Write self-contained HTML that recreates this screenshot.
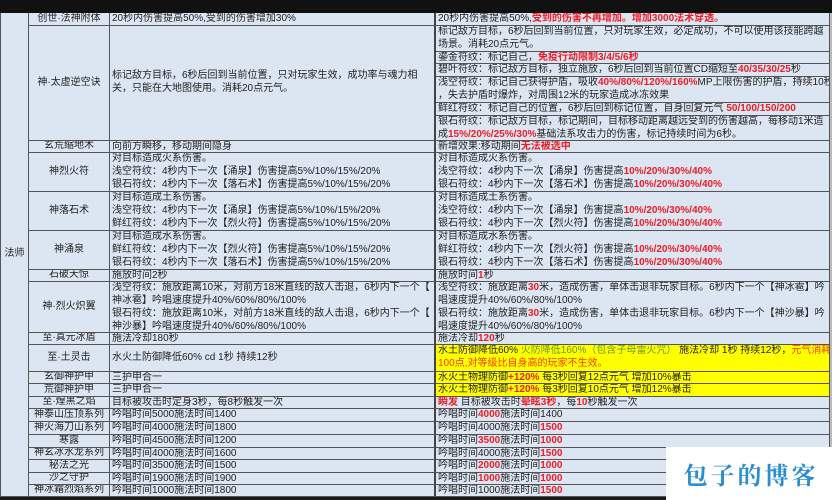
<!DOCTYPE html>
<html><head><meta charset="utf-8"><style>
*{margin:0;padding:0;box-sizing:border-box}
body{width:832px;height:500px;overflow:hidden;background:#1a1a1a;position:relative;font-family:"Liberation Sans","Noto Sans CJK SC",sans-serif;font-size:10px;color:#222;}
.c{position:absolute;background:#dce6f2;border-right:1px solid #555;border-bottom:1px solid #555;line-height:12.9px;padding-left:2px;white-space:nowrap;overflow:hidden}
.m{display:flex;align-items:center;justify-content:center;padding:0}
.r{color:#ee1c24;font-weight:bold}
.y{background:#ffff00}
.g{color:#6a9a2a}
.o{color:#ff3a00}
</style></head><body>
<div style="position:absolute;left:0;top:0;width:832px;height:13px;background:#111"></div>
<div class="c m" style="left:0;top:13px;width:29px;height:484px;border-left:1px solid #555">法师</div>

<div class="c m" style="left:29px;top:13px;width:81px;height:13px">创世·法神附体</div>
<div class="c m" style="left:29px;top:26px;width:81px;height:115px">神·太虚逆空诀</div>
<div class="c m" style="left:29px;top:141px;width:81px;height:12px">玄荒缩地术</div>
<div class="c m" style="left:29px;top:153px;width:81px;height:39px">神烈火符</div>
<div class="c m" style="left:29px;top:192px;width:81px;height:39px">神落石术</div>
<div class="c m" style="left:29px;top:231px;width:81px;height:39px">神涌泉</div>
<div class="c m" style="left:29px;top:270px;width:81px;height:12px">石破天惊</div>
<div class="c m" style="left:29px;top:282px;width:81px;height:51px">神·烈火炽翼</div>
<div class="c m" style="left:29px;top:333px;width:81px;height:12px">至·真元冰盾</div>
<div class="c m" style="left:29px;top:345px;width:81px;height:27px">至·土灵击</div>
<div class="c m" style="left:29px;top:372px;width:81px;height:12px">玄御神护甲</div>
<div class="c m" style="left:29px;top:384px;width:81px;height:13px">荒御神护甲</div>
<div class="c m" style="left:29px;top:397px;width:81px;height:12px">至·煌黑之焰</div>
<div class="c m" style="left:29px;top:409px;width:81px;height:13px">神泰山压顶系列</div>
<div class="c m" style="left:29px;top:422px;width:81px;height:13px">神火海刀山系列</div>
<div class="c m" style="left:29px;top:435px;width:81px;height:13px">寒露</div>
<div class="c m" style="left:29px;top:448px;width:81px;height:12px">神玄冰水龙系列</div>
<div class="c m" style="left:29px;top:460px;width:81px;height:13px">秘法之光</div>
<div class="c m" style="left:29px;top:473px;width:81px;height:12px">沙之守护</div>
<div class="c m" style="left:29px;top:485px;width:81px;height:12px">神冰霜烈焰系列</div>

<div class="c" style="left:110px;top:13px;width:326px;height:13px;border-right:2px solid #444">20秒内伤害提高50%,受到的伤害增加30%</div>
<div class="c" style="left:110px;top:26px;width:326px;height:115px;border-right:2px solid #444;display:flex;align-items:center">标记敌方目标，6秒后回到当前位置，只对玩家生效，成功率与魂力相<br>关，只能在大地图使用。消耗20点元气。</div>
<div class="c" style="left:110px;top:141px;width:326px;height:12px;border-right:2px solid #444">向前方瞬移，移动期间隐身</div>
<div class="c" style="left:110px;top:153px;width:326px;height:39px;border-right:2px solid #444">对目标造成火系伤害。<br>浅空符纹：4秒内下一次【涌泉】伤害提高5%/10%/15%/20%<br>银石符纹：4秒内下一次【落石术】伤害提高5%/10%/15%/20%</div>
<div class="c" style="left:110px;top:192px;width:326px;height:39px;border-right:2px solid #444">对目标造成土系伤害。<br>浅空符纹：4秒内下一次【涌泉】伤害提高5%/10%/15%/20%<br>鲜红符纹：4秒内下一次【烈火符】伤害提高5%/10%/15%/20%</div>
<div class="c" style="left:110px;top:231px;width:326px;height:39px;border-right:2px solid #444">对目标造成水系伤害。<br>鲜红符纹：4秒内下一次【烈火符】伤害提高5%/10%/15%/20%<br>银石符纹：4秒内下一次【落石术】伤害提高5%/10%/15%/20%</div>
<div class="c" style="left:110px;top:270px;width:326px;height:12px;border-right:2px solid #444">施放时间2秒</div>
<div class="c" style="left:110px;top:282px;width:326px;height:51px;border-right:2px solid #444">浅空符纹：施放距离10米，对前方18米直线的敌人击退，6秒内下一个【<br>神冰雹】吟唱速度提升40%/60%/80%/100%<br>银石符纹：施放距离10米，对前方18米直线的敌人击退，6秒内下一个【<br>神沙暴】吟唱速度提升40%/60%/80%/100%</div>
<div class="c" style="left:110px;top:333px;width:326px;height:12px;border-right:2px solid #444">施法冷却180秒</div>
<div class="c" style="left:110px;top:345px;width:326px;height:27px;border-right:2px solid #444;display:flex;align-items:center">水火土防御降低60% cd 1秒 持续12秒</div>
<div class="c" style="left:110px;top:372px;width:326px;height:12px;border-right:2px solid #444">三护甲合一</div>
<div class="c" style="left:110px;top:384px;width:326px;height:13px;border-right:2px solid #444">三护甲合一</div>
<div class="c" style="left:110px;top:397px;width:326px;height:12px;border-right:2px solid #444">目标被攻击时定身3秒，每8秒触发一次</div>
<div class="c" style="left:110px;top:409px;width:326px;height:13px;border-right:2px solid #444">吟唱时间5000施法时间1400</div>
<div class="c" style="left:110px;top:422px;width:326px;height:13px;border-right:2px solid #444">吟唱时间4000施法时间1800</div>
<div class="c" style="left:110px;top:435px;width:326px;height:13px;border-right:2px solid #444">吟唱时间4500施法时间1200</div>
<div class="c" style="left:110px;top:448px;width:326px;height:12px;border-right:2px solid #444">吟唱时间4000施法时间1600</div>
<div class="c" style="left:110px;top:460px;width:326px;height:13px;border-right:2px solid #444">吟唱时间3500施法时间1500</div>
<div class="c" style="left:110px;top:473px;width:326px;height:12px;border-right:2px solid #444">吟唱时间1900施法时间1900</div>
<div class="c" style="left:110px;top:485px;width:326px;height:12px;border-right:2px solid #444">吟唱时间1000施法时间1800</div>

<div class="c" style="left:436px;top:13px;width:394px;height:13px">20秒内伤害提高50%,<span class="r">受到的伤害不再增加。增加3000法术穿透。</span></div>
<div class="c" style="left:436px;top:26px;width:394px;height:26px">标记敌方目标，6秒后回到当前位置，只对玩家生效，必定成功，不可以使用该技能跨越<br>场景。消耗20点元气。</div>
<div class="c" style="left:436px;top:52px;width:394px;height:12px">鎏金符纹：标记自己，<span class="r">免疫行动限制3/4/5/6秒</span></div>
<div class="c" style="left:436px;top:64px;width:394px;height:13px">碧叶符纹：标记敌方目标，独立施放，6秒后回到当前位置CD缩短至<span class="r">40/35/30/25</span>秒</div>
<div class="c" style="left:436px;top:77px;width:394px;height:26px">浅空符纹：标记自己获得护盾，吸收<span class="r">40%/80%/120%/160%</span>MP上限伤害的护盾，持续10秒<br>，失去护盾时爆炸，对周围12米的玩家造成冰冻效果</div>
<div class="c" style="left:436px;top:103px;width:394px;height:13px">鲜红符纹：标记自己的位置，6秒后回到标记位置，自身回复元气 <span class="r">50/100/150/200</span></div>
<div class="c" style="left:436px;top:116px;width:394px;height:25px">银石符纹：标记敌方目标，标记期间，目标移动距离越远受到的伤害越高，每移动1米造<br>成<span class="r">15%/20%/25%/30%</span>基础法系攻击力的伤害，标记持续时间为6秒。</div>
<div class="c" style="left:436px;top:141px;width:394px;height:12px">新增效果:移动期间<span class="r">无法被选中</span></div>
<div class="c" style="left:436px;top:153px;width:394px;height:39px">对目标造成火系伤害。<br>浅空符纹：4秒内下一次【涌泉】伤害提高<span class="r">10%/20%/30%/40%</span><br>银石符纹：4秒内下一次【落石术】伤害提高<span class="r">10%/20%/30%/40%</span></div>
<div class="c" style="left:436px;top:192px;width:394px;height:39px">对目标造成土系伤害。<br>浅空符纹：4秒内下一次【涌泉】伤害提高<span class="r">10%/20%/30%/40%</span><br>银石符纹：4秒内下一次【烈火符】伤害提高<span class="r">10%/20%/30%/40%</span></div>
<div class="c" style="left:436px;top:231px;width:394px;height:39px">对目标造成水系伤害。<br>鲜红符纹：4秒内下一次【烈火符】伤害提高<span class="r">10%/20%/30%/40%</span><br>银石符纹：4秒内下一次【落石术】伤害提高<span class="r">10%/20%/30%/40%</span></div>
<div class="c" style="left:436px;top:270px;width:394px;height:12px">施放时间<span class="r">1</span>秒</div>
<div class="c" style="left:436px;top:282px;width:394px;height:51px">浅空符纹：施放距离<span class="r">30</span>米，造成伤害，单体击退非玩家目标。6秒内下一个【神冰雹】吟<br>唱速度提升40%/60%/80%/100%<br>银石符纹：施放距离<span class="r">30</span>米，造成伤害，单体击退非玩家目标。6秒内下一个【神沙暴】吟<br>唱速度提升40%/60%/80%/100%</div>
<div class="c" style="left:436px;top:333px;width:394px;height:12px">施法冷却<span class="r">120</span>秒</div>
<div class="c y" style="left:436px;top:345px;width:394px;height:27px">水土防御降低60% <span class="g">火防降低160%（包含子母雷火咒）</span> 施法冷却 1秒 持续12秒，<span class="o">元气消耗<br>100点,对等级比自身高的玩家不生效。</span></div>
<div class="c y" style="left:436px;top:372px;width:394px;height:12px">水火土物理防御<span class="r">+120%</span> 每3秒回复12点元气 增加10%暴击</div>
<div class="c y" style="left:436px;top:384px;width:394px;height:13px">水火土物理防御<span class="r">+120%</span> 每3秒回复10点元气 增加12%暴击</div>
<div class="c" style="left:436px;top:397px;width:394px;height:12px"><span class="r">瞬发</span> 目标被攻击时<span class="r">晕眩3秒</span>，每<span class="r">10</span>秒触发一次</div>
<div class="c" style="left:436px;top:409px;width:394px;height:13px">吟唱时间<span class="r">4000</span>施法时间1400</div>
<div class="c" style="left:436px;top:422px;width:394px;height:13px">吟唱时间4000施法时间<span class="r">1500</span></div>
<div class="c" style="left:436px;top:435px;width:394px;height:13px">吟唱时间<span class="r">3500</span>施法时间<span class="r">1000</span></div>
<div class="c" style="left:436px;top:448px;width:394px;height:12px">吟唱时间4000施法时间<span class="r">1500</span></div>
<div class="c" style="left:436px;top:460px;width:394px;height:13px">吟唱时间<span class="r">2000</span>施法时间<span class="r">1000</span></div>
<div class="c" style="left:436px;top:473px;width:394px;height:12px">吟唱时间<span class="r">1000</span>施法时间<span class="r">1000</span></div>
<div class="c" style="left:436px;top:485px;width:394px;height:12px">吟唱时间1000施法时间<span class="r">1500</span></div>
<div style="position:absolute;left:830px;top:13px;width:2px;height:487px;background:#bbb"></div>

<div style="position:absolute;left:666px;top:447px;width:166px;height:53px;background:#fff;display:flex;align-items:center;justify-content:center;color:#2a8fd0;font-family:'Noto Serif CJK SC',serif;font-size:24px;font-weight:bold;letter-spacing:3px;padding-left:4px">包子的博客</div>
</body></html>
